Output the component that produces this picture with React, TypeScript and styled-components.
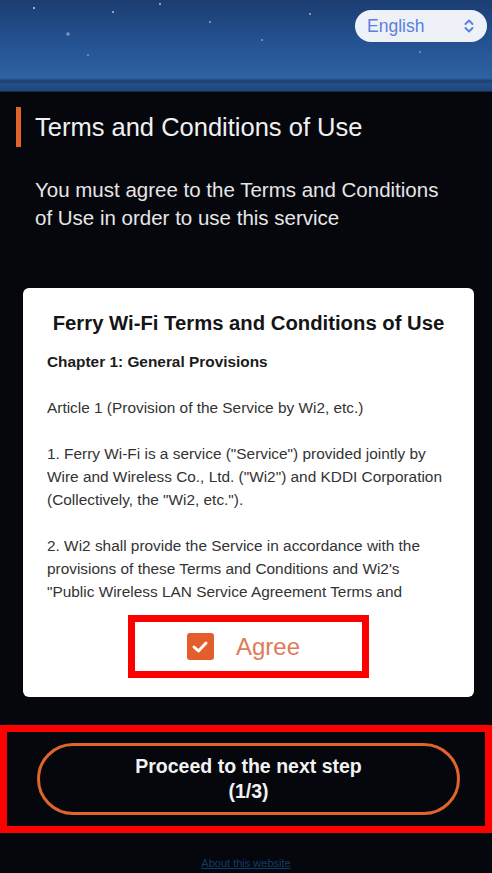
import React, { useState } from "react";
import styled, { createGlobalStyle } from "styled-components";

const GlobalStyle = createGlobalStyle`
  html, body {
    margin: 0;
    padding: 0;
    background: #06070d;
  }
  body {
    font-family: "Liberation Sans", Arial, sans-serif;
    -webkit-font-smoothing: antialiased;
  }
`;

const Page = styled.div`
  width: 492px;
  min-height: 873px;
  background: #06070d;
  overflow: hidden;
`;

/* night sky banner with a thin strip of sea at the bottom */
const Header = styled.header`
  height: 92px;
  box-sizing: border-box;
  display: flex;
  justify-content: flex-end;
  align-items: flex-start;
  padding: 10px 5px 0 0;
  background:
    radial-gradient(circle at 34px 8px, rgba(255, 255, 255, 0.6) 0 1px, transparent 1.5px),
    radial-gradient(circle at 113px 12px, rgba(255, 255, 255, 0.5) 0 1px, transparent 1.5px),
    radial-gradient(circle at 68px 34px, rgba(255, 255, 255, 0.35) 0 1.5px, transparent 2px),
    radial-gradient(circle at 160px 4px, rgba(255, 255, 255, 0.5) 0 1px, transparent 1.5px),
    radial-gradient(circle at 210px 22px, rgba(255, 255, 255, 0.4) 0 1px, transparent 1.5px),
    radial-gradient(circle at 262px 40px, rgba(255, 255, 255, 0.35) 0 1px, transparent 1.5px),
    radial-gradient(circle at 310px 14px, rgba(255, 255, 255, 0.45) 0 1px, transparent 1.5px),
    radial-gradient(circle at 88px 55px, rgba(255, 255, 255, 0.3) 0 1px, transparent 1.5px),
    radial-gradient(circle at 420px 52px, rgba(255, 255, 255, 0.3) 0 1px, transparent 1.5px),
    linear-gradient(
      to bottom,
      #1b3d72 0px,
      #24518f 40px,
      #2d62a3 78px,
      #1d3e6e 81px,
      #23508b 84px,
      #1f4678 91px,
      #0a0d18 92px
    );
`;

const LangSelect = styled.div`
  width: 132px;
  height: 32px;
  box-sizing: border-box;
  border-radius: 16px;
  background: #eef1f8;
  display: flex;
  align-items: center;
  justify-content: space-between;
  padding: 0 12px 0 12px;
  color: #5b80df;
  font-size: 17.5px;
`;

const Section = styled.section`
  padding: 15px 0 0 16px;
`;

const Heading = styled.h1`
  margin: 0;
  height: 40px;
  display: flex;
  align-items: center;
  border-left: 5px solid #e0642c;
  padding-left: 14px;
  color: #f1f1f1;
  font-size: 25.5px;
  font-weight: 400;
`;

const Lead = styled.p`
  margin: 29px 36px 0 19px;
  color: #e6e6e6;
  font-size: 20.5px;
  line-height: 28px;
`;

const Card = styled.div`
  margin: 56px 18px 0 23px;
  background: #ffffff;
  border-radius: 6px;
  padding: 23px 24px 19px;
  display: flex;
  flex-direction: column;
  align-items: center;
`;

const CardTitle = styled.h2`
  margin: 0 0 15px;
  color: #151515;
  font-size: 20.3px;
  line-height: 24px;
  font-weight: 700;
  text-align: center;
  white-space: nowrap;
`;

const TermsScroll = styled.div`
  align-self: stretch;
  height: 256px;
  overflow: hidden;
  color: #333333;
  font-size: 15.4px;
  line-height: 23px;
`;

const TermsPara = styled.p<{ $bold?: boolean }>`
  margin: 0 0 23px;
  font-weight: ${(p) => (p.$bold ? 700 : 400)};
  color: ${(p) => (p.$bold ? "#1c1c1c" : "#333333")};
`;

const Highlight = styled.div<{ $full?: boolean }>`
  border: 7px solid #ff0000;
  box-sizing: border-box;
  ${(p) => (p.$full ? "width: 492px;" : "width: 241px; margin-top: 9px;")}
`;

const AgreeLabel = styled.label`
  height: 49px;
  display: flex;
  align-items: center;
  justify-content: center;
  gap: 22px;
  padding-right: 10px;
  cursor: pointer;
  color: #e07b57;
  font-size: 24px;
  user-select: none;
`;

const CheckBox = styled.span<{ $on: boolean }>`
  width: 27px;
  height: 27px;
  border-radius: 3px;
  background: ${(p) => (p.$on ? "#e35e2c" : "#ffffff")};
  border: ${(p) => (p.$on ? "none" : "2px solid #e35e2c")};
  box-sizing: border-box;
  display: flex;
  align-items: center;
  justify-content: center;
`;

const ButtonArea = styled.div`
  margin-top: 28px;
`;

const ProceedButton = styled.button`
  display: block;
  width: 423px;
  height: 72px;
  margin: 11px 0 11px 30px;
  border: 3px solid #e0642c;
  border-radius: 36px;
  background: transparent;
  color: #f2f2f2;
  font-family: "Liberation Sans", Arial, sans-serif;
  font-size: 19.5px;
  line-height: 25px;
  font-weight: 700;
  cursor: pointer;
`;

const Footer = styled.footer`
  padding-top: 20px;
  text-align: center;
`;

const FooterLink = styled.a`
  color: #0d3b6c;
  font-size: 11px;
  text-decoration: underline;
`;

const UpDownIcon = () => (
  <svg width="12" height="16" viewBox="0 0 12 16" fill="none">
    <path
      d="M2.5 6 L6 2.5 L9.5 6 M2.5 10 L6 13.5 L9.5 10"
      stroke="#5b80df"
      strokeWidth="2"
      strokeLinecap="round"
      strokeLinejoin="round"
    />
  </svg>
);

const CheckMark = () => (
  <svg width="18" height="14" viewBox="0 0 18 14" fill="none">
    <path
      d="M3 7 L7.5 11 L15 3"
      stroke="#ffffff"
      strokeWidth="3"
      strokeLinecap="round"
      strokeLinejoin="round"
    />
  </svg>
);

const App = () => {
  const [agreed, setAgreed] = useState(true);

  return (
    <Page>
      <GlobalStyle />
      <Header>
        <LangSelect>
          English
          <UpDownIcon />
        </LangSelect>
      </Header>

      <Section>
        <Heading>Terms and Conditions of Use</Heading>
        <Lead>
          You must agree to the Terms and Conditions of Use in order to use this service
        </Lead>
      </Section>

      <Card>
        <CardTitle>Ferry Wi-Fi Terms and Conditions of Use</CardTitle>
        <TermsScroll>
          <TermsPara $bold>Chapter 1: General Provisions</TermsPara>
          <TermsPara>Article 1 (Provision of the Service by Wi2, etc.)</TermsPara>
          <TermsPara>
            1. Ferry Wi-Fi is a service ("Service") provided jointly by Wire and Wireless Co.,
            Ltd. ("Wi2") and KDDI Corporation (Collectively, the "Wi2, etc.").
          </TermsPara>
          <TermsPara>
            2. Wi2 shall provide the Service in accordance with the provisions of these Terms
            and Conditions and Wi2's "Public Wireless LAN Service Agreement Terms and
            Conditions" separately established by Wi2.
          </TermsPara>
        </TermsScroll>
        <Highlight>
          <AgreeLabel onClick={() => setAgreed(!agreed)}>
            <CheckBox $on={agreed}>{agreed && <CheckMark />}</CheckBox>
            Agree
          </AgreeLabel>
        </Highlight>
      </Card>

      <ButtonArea>
        <Highlight $full>
          <ProceedButton>
            Proceed to the next step
            <br />
            (1/3)
          </ProceedButton>
        </Highlight>
      </ButtonArea>

      <Footer>
        <FooterLink href="#">About this website</FooterLink>
      </Footer>
    </Page>
  );
};

export default App;
